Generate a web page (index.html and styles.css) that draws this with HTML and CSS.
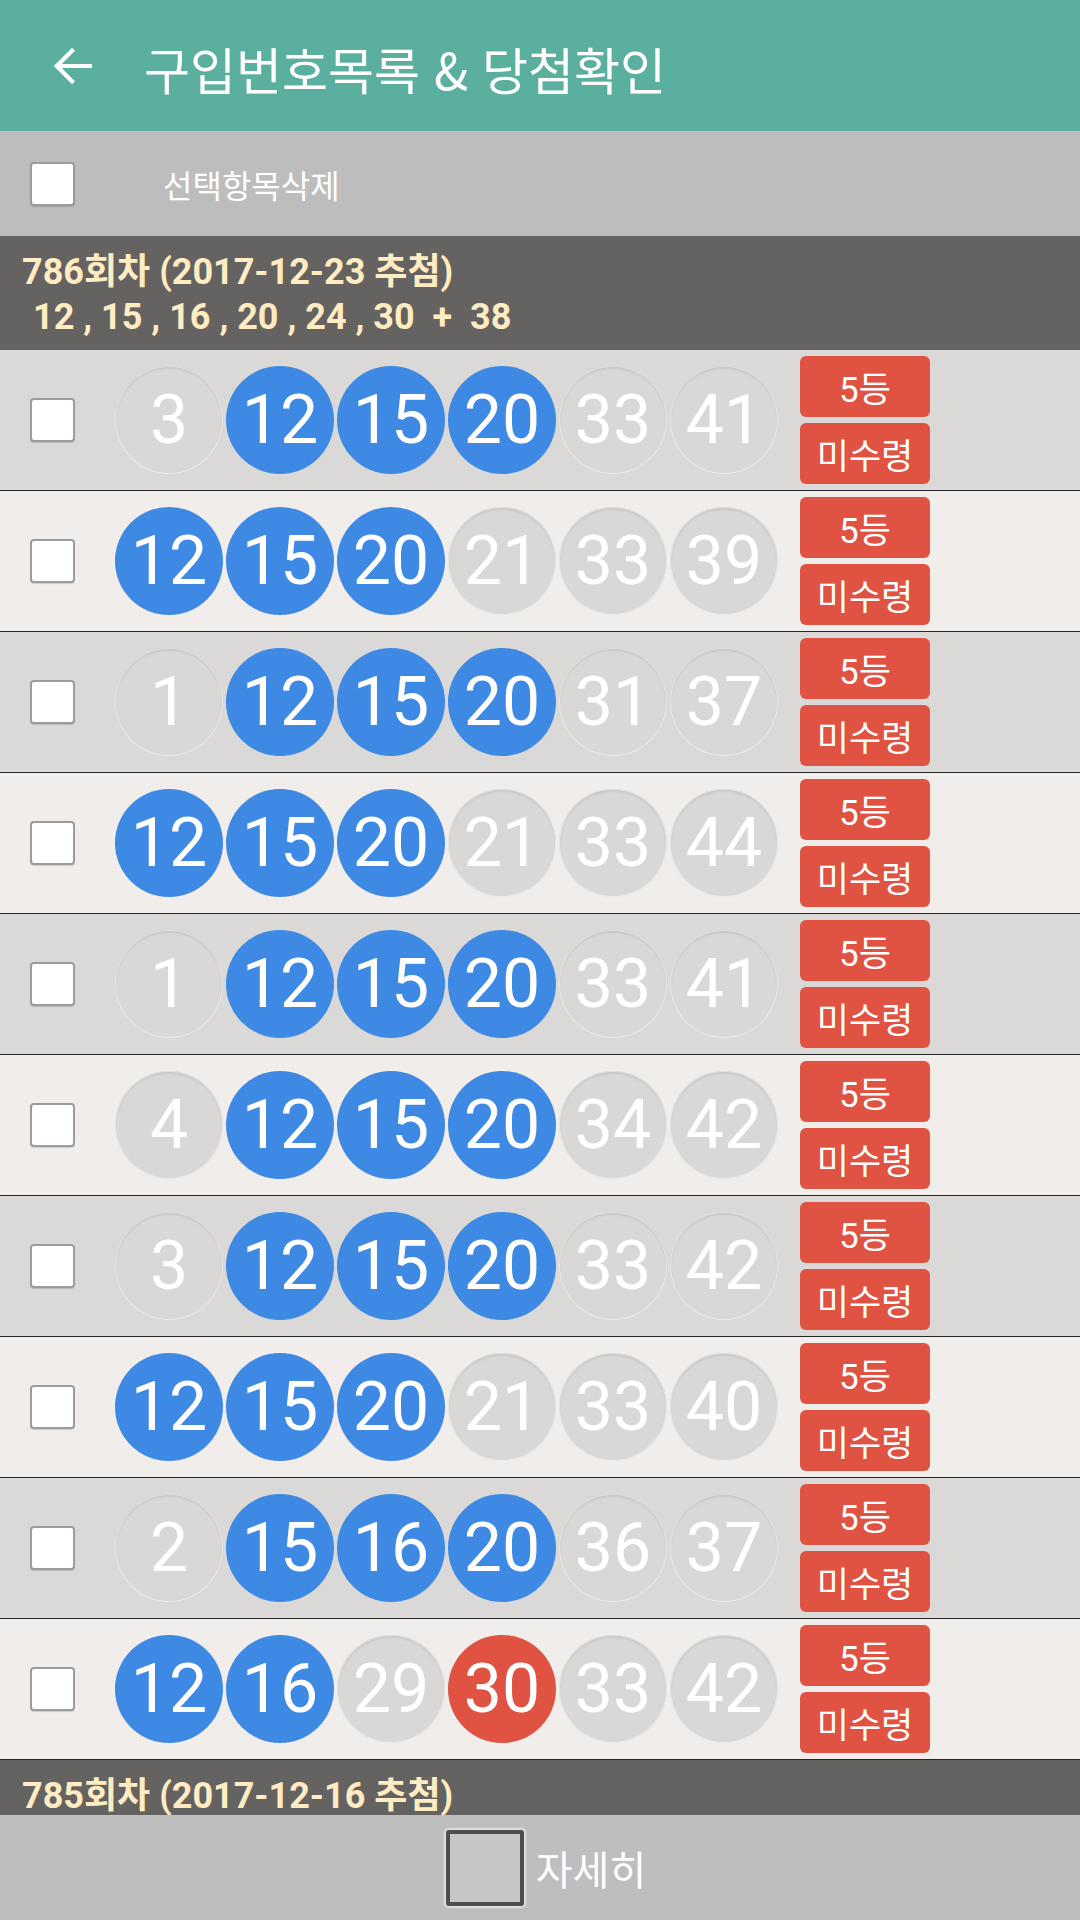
FILE: index.html
```html
<!DOCTYPE html>
<html lang="ko">
<head>
  <meta charset="UTF-8">
  <title>구입번호목록 &amp; 당첨확인</title>
  <meta name="viewport" content="width=device-width, initial-scale=1.0">
  <link rel="stylesheet" href="styles.css">
</head>
<body>
  <header class="topbar">
    <button class="back" aria-label="뒤로">
      <svg viewBox="0 0 24 24" width="60" height="60"><path fill="#fff" d="M20 11.2H7.9l5.3-5.3L12 4.7 4.7 12l7.3 7.3 1.2-1.2-5.3-5.3H20z"/></svg>
    </button>
    <h1 class="title">구입번호목록 &amp; 당첨확인</h1>
  </header>

  <div class="toolbar">
    <span class="check"></span>
    <span class="toolbar-label">선택항목삭제</span>
  </div>

  <main class="list">
    <section class="round">
      <div class="round-title">786회차 (2017-12-23 추첨)</div>
      <div class="round-nums">12 , 15 , 16 , 20 , 24 , 30  +  38</div>
    </section>

    <div class="row">
      <span class="check"></span>
      <div class="balls">
        <span class="ball">3</span><span class="ball hit">12</span><span class="ball hit">15</span><span class="ball hit">20</span><span class="ball">33</span><span class="ball">41</span>
      </div>
      <div class="badges"><span class="badge">5등</span><span class="badge">미수령</span></div>
    </div>

    <div class="row alt">
      <span class="check"></span>
      <div class="balls">
        <span class="ball hit">12</span><span class="ball hit">15</span><span class="ball hit">20</span><span class="ball">21</span><span class="ball">33</span><span class="ball">39</span>
      </div>
      <div class="badges"><span class="badge">5등</span><span class="badge">미수령</span></div>
    </div>

    <div class="row">
      <span class="check"></span>
      <div class="balls">
        <span class="ball">1</span><span class="ball hit">12</span><span class="ball hit">15</span><span class="ball hit">20</span><span class="ball">31</span><span class="ball">37</span>
      </div>
      <div class="badges"><span class="badge">5등</span><span class="badge">미수령</span></div>
    </div>

    <div class="row alt">
      <span class="check"></span>
      <div class="balls">
        <span class="ball hit">12</span><span class="ball hit">15</span><span class="ball hit">20</span><span class="ball">21</span><span class="ball">33</span><span class="ball">44</span>
      </div>
      <div class="badges"><span class="badge">5등</span><span class="badge">미수령</span></div>
    </div>

    <div class="row">
      <span class="check"></span>
      <div class="balls">
        <span class="ball">1</span><span class="ball hit">12</span><span class="ball hit">15</span><span class="ball hit">20</span><span class="ball">33</span><span class="ball">41</span>
      </div>
      <div class="badges"><span class="badge">5등</span><span class="badge">미수령</span></div>
    </div>

    <div class="row alt">
      <span class="check"></span>
      <div class="balls">
        <span class="ball">4</span><span class="ball hit">12</span><span class="ball hit">15</span><span class="ball hit">20</span><span class="ball">34</span><span class="ball">42</span>
      </div>
      <div class="badges"><span class="badge">5등</span><span class="badge">미수령</span></div>
    </div>

    <div class="row">
      <span class="check"></span>
      <div class="balls">
        <span class="ball">3</span><span class="ball hit">12</span><span class="ball hit">15</span><span class="ball hit">20</span><span class="ball">33</span><span class="ball">42</span>
      </div>
      <div class="badges"><span class="badge">5등</span><span class="badge">미수령</span></div>
    </div>

    <div class="row alt">
      <span class="check"></span>
      <div class="balls">
        <span class="ball hit">12</span><span class="ball hit">15</span><span class="ball hit">20</span><span class="ball">21</span><span class="ball">33</span><span class="ball">40</span>
      </div>
      <div class="badges"><span class="badge">5등</span><span class="badge">미수령</span></div>
    </div>

    <div class="row">
      <span class="check"></span>
      <div class="balls">
        <span class="ball">2</span><span class="ball hit">15</span><span class="ball hit">16</span><span class="ball hit">20</span><span class="ball">36</span><span class="ball">37</span>
      </div>
      <div class="badges"><span class="badge">5등</span><span class="badge">미수령</span></div>
    </div>

    <div class="row alt">
      <span class="check"></span>
      <div class="balls">
        <span class="ball hit">12</span><span class="ball hit">16</span><span class="ball">29</span><span class="ball bonus">30</span><span class="ball">33</span><span class="ball">42</span>
      </div>
      <div class="badges"><span class="badge">5등</span><span class="badge">미수령</span></div>
    </div>

    <section class="round">
      <div class="round-title">785회차 (2017-12-16 추첨)</div>
    </section>
  </main>

  <footer class="bottombar">
    <span class="more-box"></span>
    <span class="more-label">자세히</span>
  </footer>
</body>
</html>
```

FILE: styles.css
```css
body {
  margin: 0;
  height: 100vh;
  display: flex;
  flex-direction: column;
  overflow: hidden;
  font-family: "Noto Sans CJK KR", "Noto Sans", sans-serif;
  background-color: #f0edea;
}

/* === Top app bar === */
.topbar {
  height: 131px;
  flex-shrink: 0;
  display: flex;
  align-items: center;
  padding-left: 42px;
  background-color: #5aaf9f;
}

.back {
  width: 60px;
  height: 60px;
  padding: 0;
  border: none;
  background: none;
  display: block;
}

.back svg {
  display: block;
}

.title {
  margin: 4px 0 0 42px;
  font-size: 50px;
  font-weight: 400;
  line-height: 1;
  color: #fff;
}

/* === Delete toolbar === */
.toolbar {
  height: 105px;
  flex-shrink: 0;
  display: flex;
  align-items: center;
  padding-left: 30px;
  background-color: #bdbdbd;
}

.toolbar-label {
  margin-left: 88px;
  font-size: 32px;
  color: #fff;
}

.check {
  width: 41px;
  height: 40px;
  flex-shrink: 0;
  background: #fff;
  border: 2px solid #9c9c9c;
  border-radius: 4px;
  box-shadow: 0 1px 1px rgba(0, 0, 0, 0.15);
}

/* === List === */
.list {
  flex: 1;
  overflow: hidden;
}

.round {
  padding: 14px 0 10px 22px;
  background-color: #656361;
  color: #ffecc2;
  font-family: Roboto, "Noto Sans CJK KR", sans-serif;
  font-weight: 700;
  font-size: 36px;
  line-height: 45px;
}

.round-nums {
  padding-left: 11px;
  white-space: pre;
}

.row {
  height: 140px;
  display: flex;
  align-items: center;
  padding-left: 30px;
  border-bottom: 1px solid #262626;
  background-color: #dad9d7;
}

.row.alt {
  background-color: #f0edea;
}

.balls {
  display: flex;
  gap: 3px;
  margin-left: 40px;
}

.ball {
  width: 108px;
  height: 108px;
  border-radius: 50%;
  display: flex;
  align-items: center;
  justify-content: center;
  font-family: Roboto, sans-serif;
  font-size: 68px;
  line-height: 1;
  color: #fff;
  background-color: #d9d8d6;
  box-shadow: inset 0 0 0 1px rgba(255, 255, 255, 0.5), inset 0 2px 3px rgba(0, 0, 0, 0.12);
}

.ball.hit {
  background-color: #3d89e4;
  box-shadow: none;
}

.ball.bonus {
  background-color: #e05241;
  box-shadow: none;
}

.badges {
  display: flex;
  flex-direction: column;
  gap: 6px;
  margin-left: 22px;
}

.badge {
  width: 130px;
  height: 61px;
  border-radius: 6px;
  display: flex;
  align-items: center;
  justify-content: center;
  background-color: #e05241;
  color: #fff;
  font-family: Roboto, "Noto Sans CJK KR", sans-serif;
  font-size: 35px;
}

/* === Bottom bar === */
.bottombar {
  height: 105px;
  flex-shrink: 0;
  display: flex;
  align-items: center;
  justify-content: center;
  padding-left: 12px;
  background-color: #bebebe;
}

.more-box {
  width: 70px;
  height: 68px;
  border: 4px solid #4d4d4d;
  border-radius: 3px;
  background-color: #c6c6c6;
  box-shadow: 0 0 2px 2px rgba(255, 255, 255, 0.55);
}

.more-label {
  margin-left: 12px;
  font-size: 40px;
  color: #fff;
}
```
